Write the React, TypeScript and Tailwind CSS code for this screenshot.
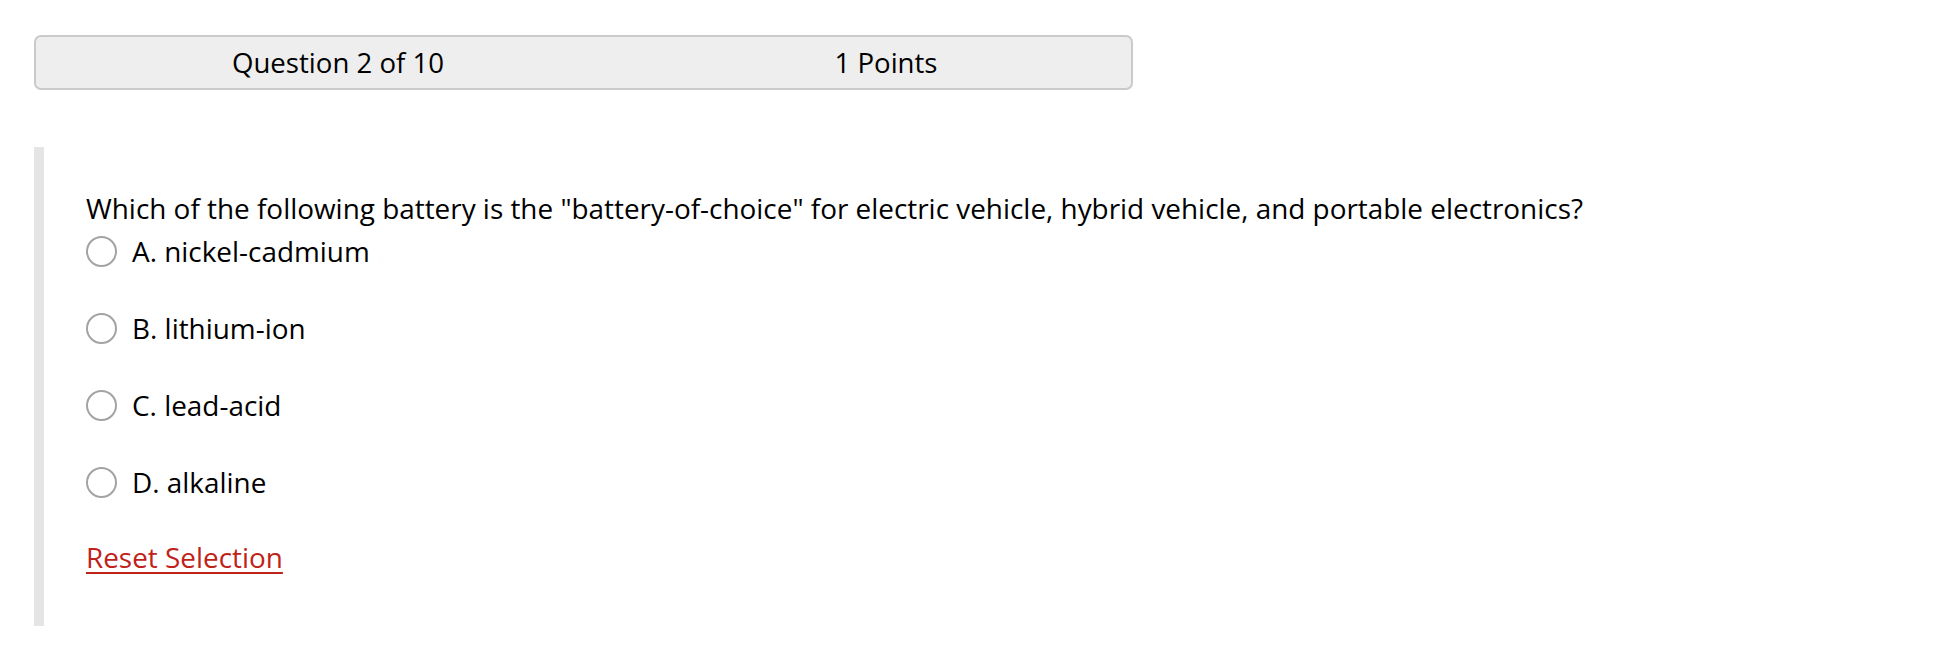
import React from "react";

const options = [
  "A. nickel-cadmium",
  "B. lithium-ion",
  "C. lead-acid",
  "D. alkaline",
];

const App = () => {
  return (
    <main className="min-h-screen bg-white pl-[34px] pt-[35px] text-black [font-family:'Open_Sans',sans-serif]">
      {/* Header */}
      <div className="grid h-[55px] w-[1099px] grid-cols-[548px_548px] items-center rounded-[7px] border-2 border-[#cacaca] bg-[#eeeeee] pl-[28px] text-[27.6px] leading-none">
        <div className="text-center">Question 2 of 10</div>
        <div className="text-center">1 Points</div>
      </div>

      {/* Question block */}
      <section className="mt-[57px] border-l-[10px] border-[#e5e5e5] pb-[48px] pl-[42px] pt-[41px] text-[27.9px] leading-[41px]">
        <p>
          Which of the following battery is the "battery-of-choice" for electric
          vehicle, hybrid vehicle, and portable electronics?
        </p>

        <div className="mt-[2px] flex flex-col gap-[36px]">
          {options.map((label) => (
            <label key={label} className="flex h-[41px] items-center gap-[15px]">
              <span className="h-[31px] w-[31px] shrink-0 rounded-full border-2 border-[#a3a3a3] bg-white" />
              <span>{label}</span>
            </label>
          ))}
        </div>

        <a
          href="#"
          className="mt-[34px] inline-block text-[#bf2219] underline decoration-[2px] underline-offset-[4px]"
        >
          Reset Selection
        </a>
      </section>
    </main>
  );
};

export default App;
